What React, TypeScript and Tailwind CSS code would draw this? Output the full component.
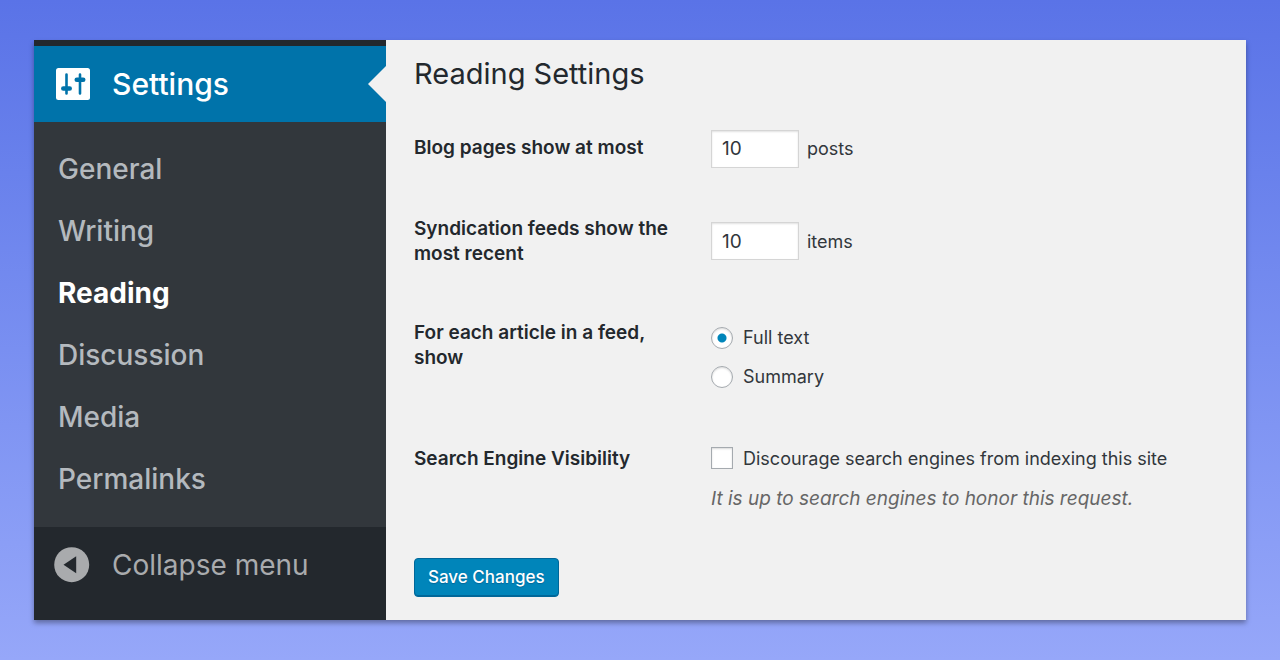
import { useState } from "react";
import type { ReactNode } from "react";

const MENU_ITEMS = ["General", "Writing", "Reading", "Discussion", "Media", "Permalinks"];

function SettingsIcon() {
  return (
    <svg width="34" height="32" viewBox="0 0 34 32" aria-hidden="true">
      <rect width="34" height="32" rx="2.5" fill="#fff" />
      <g stroke="#0073aa" strokeWidth="2.6" strokeLinecap="round">
        <path d="M10.500 6.500v19M24 6.500v19" />
      </g>
      <g fill="#0073aa">
        <rect x="5" y="18.2" width="11" height="4.600" rx="2.3" />
        <rect x="18.500" y="9.500" width="11" height="4.600" rx="2.3" />
      </g>
    </svg>
  );
}

function CollapseIcon() {
  return (
    <svg width="36" height="36" viewBox="0 0 36 36" aria-hidden="true">
      <circle cx="17.7" cy="17.700" r="17.500" fill="#a9abad" />
      <path d="M9.500 17.700l12.700-8.500v17z" fill="#23282d" />
    </svg>
  );
}

function Sidebar() {
  const [current, setCurrent] = useState("Reading");

  return (
    <nav className="w-[352px] shrink-0 bg-[#23282d] pt-1.5 pb-4 text-[28px] leading-9">
      <a
        href="#settings"
        className="relative flex h-[76px] items-center gap-[22px] bg-[#0073aa] pl-[22px] text-[30px] font-medium text-white"
      >
        <SettingsIcon />
        Settings
        <span className="absolute top-1/2 right-0 h-9 w-[18px] -translate-y-1/2 bg-[#f1f1f1] [clip-path:polygon(100%_0,0_50%,100%_100%)]" />
      </a>
      <ul className="bg-[#32373c] pt-4 pb-[17px]">
        {MENU_ITEMS.map((item) => (
          <li key={item}>
            <a
              href={`#${item.toLowerCase()}`}
              onClick={() => setCurrent(item)}
              className={
                item === current
                  ? "flex h-[62px] items-center pl-6 font-bold text-white"
                  : "flex h-[62px] items-center pl-6 font-medium text-[#b4b9be]"
              }
            >
              {item}
            </a>
          </li>
        ))}
      </ul>
      <button type="button" className="flex h-[76px] w-full items-center gap-[22px] pl-5 text-[#a9abad]">
        <CollapseIcon />
        Collapse menu
      </button>
    </nav>
  );
}

interface RowProps {
  label: ReactNode;
  className: string;
  children: ReactNode;
}

function Row({ label, className, children }: RowProps) {
  return (
    <div className={`grid grid-cols-[297px_1fr] items-center ${className}`}>
      <div className="self-start py-[26px] pr-9 text-[19px] leading-[25px] font-semibold text-[#23282d]">
        {label}
      </div>
      <div>{children}</div>
    </div>
  );
}

const inputClass =
  "h-[38px] w-[88px] border border-[#d5d5d5] bg-white px-2.5 text-[19px] text-[#32373c] shadow-[inset_0_1px_2px_rgba(0,0,0,0.12)]";

const radioClass =
  "size-[22px] appearance-none rounded-full border border-[#a5aaaf] bg-white shadow-[inset_0_1px_2px_rgba(0,0,0,0.15)] checked:bg-[radial-gradient(circle,#0085ba_4px,#fff_5px)]";

export default function App() {
  const [posts, setPosts] = useState("10");
  const [items, setItems] = useState("10");
  const [feed, setFeed] = useState("full");
  const [discourage, setDiscourage] = useState(false);

  return (
    <div className="min-h-screen bg-linear-to-b from-[#5a73e7] to-[#96a7f9] px-[34px] py-10 font-[Inter,sans-serif]">
      <div className="flex shadow-[0_3px_5px_rgba(0,0,0,0.35)]">
        <Sidebar />
        <main className="grow bg-[#f1f1f1] px-7 pt-4 pb-[23px] text-[18px] text-[#32373c]">
          <h1 className="text-[29px] leading-9 text-[#23282d]">Reading Settings</h1>
          <form className="pt-[17px]" onSubmit={(e) => e.preventDefault()}>
            <Row className="min-h-[81px]" label={<label htmlFor="posts">Blog pages show at most</label>}>
              <div className="flex items-center gap-2 pb-0.5">
                <input id="posts" className={inputClass} value={posts} onChange={(e) => setPosts(e.target.value)} />
                posts
              </div>
            </Row>
            <Row
              className="min-h-[104px]"
              label={<label htmlFor="items">Syndication feeds show the most recent</label>}
            >
              <div className="flex items-center gap-2 pb-0.5">
                <input id="items" className={inputClass} value={items} onChange={(e) => setItems(e.target.value)} />
                items
              </div>
            </Row>
            <Row className="min-h-[126px]" label={<span id="feed-label">For each article in a feed, show</span>}>
              <div role="radiogroup" aria-labelledby="feed-label">
                <label className="flex h-[39px] items-center gap-2.5">
                  <input
                    type="radio"
                    name="feed"
                    className={radioClass}
                    checked={feed === "full"}
                    onChange={() => setFeed("full")}
                  />
                  Full text
                </label>
                <label className="flex h-[39px] items-center gap-2.5">
                  <input
                    type="radio"
                    name="feed"
                    className={radioClass}
                    checked={feed === "summary"}
                    onChange={() => setFeed("summary")}
                  />
                  Summary
                </label>
              </div>
            </Row>
            <Row className="min-h-[118px]" label="Search Engine Visibility">
              <label className="flex h-10 items-center gap-2.5 pb-0.5">
                <input
                  type="checkbox"
                  className="size-[22px] appearance-none border border-[#a5aaaf] bg-white shadow-[inset_0_1px_2px_rgba(0,0,0,0.15)] checked:bg-[#0085ba]"
                  checked={discourage}
                  onChange={(e) => setDiscourage(e.target.checked)}
                />
                Discourage search engines from indexing this site
              </label>
              <p className="h-10 text-[19px] leading-10 text-[#666] italic">
                It is up to search engines to honor this request.
              </p>
            </Row>
            <button
              type="submit"
              className="mt-5 h-[39px] rounded border border-[#006799] bg-[#0085ba] px-[13px] text-[17px] font-medium text-white shadow-[inset_0_-1px_0_#006799] text-shadow-[0_1px_1px_#006799]"
            >
              Save Changes
            </button>
          </form>
        </main>
      </div>
    </div>
  );
}
